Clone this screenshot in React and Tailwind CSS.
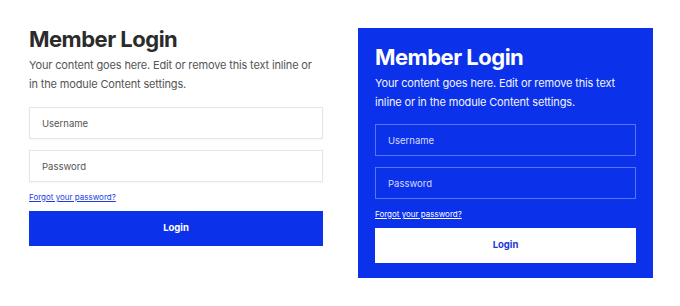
import React from 'react'

function LoginForm({ dark }) {
  const inputCls = dark
    ? 'w-full h-[32px] px-[12px] bg-transparent border border-[#5a74f5] text-[9.5px] text-white placeholder:text-[#d5dcff] outline-none'
    : 'w-full h-[32px] px-[12px] bg-white border border-[#e6e6e6] shadow-[0_1px_2px_rgba(0,0,0,0.04)] text-[9.5px] text-[#333] placeholder:text-[#555] outline-none'

  return (
    <div>
      <h2 className={`text-[22px] leading-[26px] font-bold tracking-[-0.5px] ${dark ? 'text-white' : 'text-[#2b2b2b]'}`}>
        Member Login
      </h2>
      <p className={`mt-[4px] text-[11px] leading-[19px] tracking-[-0.15px] ${dark ? 'text-[#f2f4ff]' : 'text-[#555]'}`}>
        Your content goes here. Edit or remove this text inline or in the module Content settings.
      </p>
      <div className={`${dark ? 'mt-[12px]' : 'mt-[13px]'} flex flex-col gap-[11px]`}>
        <input className={inputCls} placeholder="Username" />
        <input className={inputCls} type="password" placeholder="Password" />
      </div>
      <a href="#" className={`block mt-[9px] text-[8px] leading-[12px] underline ${dark ? 'text-white' : 'text-[#1a3de0]'}`}>
        Forgot your password?
      </a>
      <button
        className={`mt-[8px] w-full h-[35px] text-[9.5px] font-bold ${
          dark ? 'bg-white text-[#1a36d8]' : 'bg-[#0b31ea] text-white'
        }`}
      >
        Login
      </button>
    </div>
  )
}

export default function App() {
  return (
    <div className="w-[680px] h-[306px] bg-white flex items-start gap-[35px] pl-[29px] pt-[26px] font-['Inter',sans-serif]">
      <div className="w-[294px]">
        <LoginForm />
      </div>
      <div className="w-[295px] mt-[2px] bg-[#0b31ea] pt-[16px] pb-[15px] px-[17px]">
        <LoginForm dark />
      </div>
    </div>
  )
}
